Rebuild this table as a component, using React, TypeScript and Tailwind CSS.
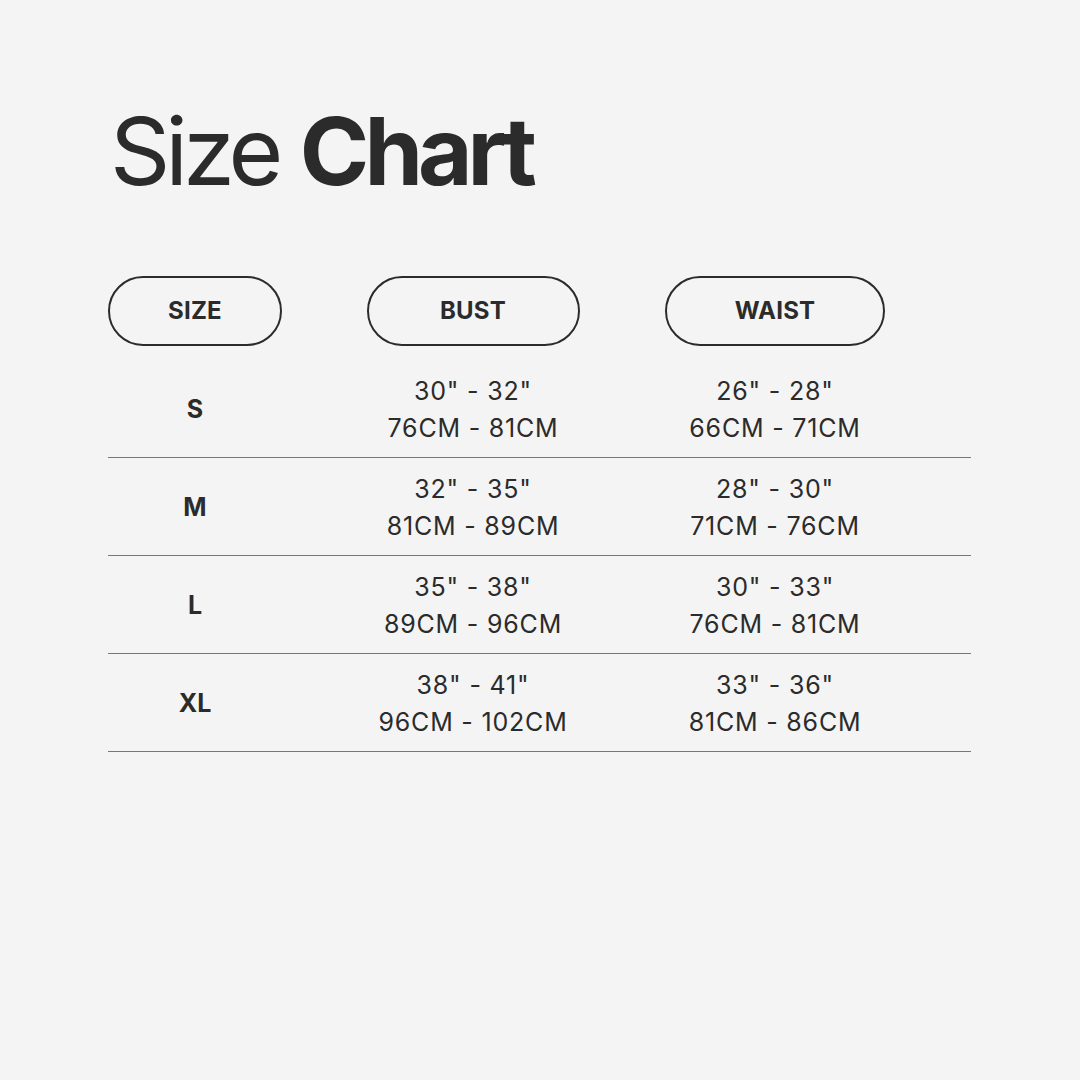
const rows = [
  { size: "S", bust: ['30" - 32"', "76CM - 81CM"], waist: ['26" - 28"', "66CM - 71CM"] },
  { size: "M", bust: ['32" - 35"', "81CM - 89CM"], waist: ['28" - 30"', "71CM - 76CM"] },
  { size: "L", bust: ['35" - 38"', "89CM - 96CM"], waist: ['30" - 33"', "76CM - 81CM"] },
  { size: "XL", bust: ['38" - 41"', "96CM - 102CM"], waist: ['33" - 36"', "81CM - 86CM"] },
];

function Cell({ lines }: { lines: string[] }) {
  return (
    <div className="flex flex-col items-center justify-center text-[25px] leading-[37px] tracking-[0.8px]">
      {lines.map((l) => (
        <span key={l}>{l}</span>
      ))}
    </div>
  );
}

export default function App() {
  return (
    <div className="w-[1080px] h-[1080px] bg-[#f4f4f4] text-[#2b2b2b] font-['Inter',sans-serif] pl-[108px] pt-[104px]">
      <h1 className="text-[94px] leading-none tracking-[-5px] pl-[2px]">
        Size <span className="font-bold">Chart</span>
      </h1>

      <div className="w-[863px] mt-[78px]">
        <div className="grid grid-cols-[174px_382px_222px] h-[70px]">
          <div className="flex items-center justify-center rounded-full border-2 border-[#2b2b2b] text-[24px] font-bold tracking-[0.2px]">
            SIZE
          </div>
          <div className="flex justify-center">
            <div className="flex items-center justify-center w-[213px] rounded-full border-2 border-[#2b2b2b] text-[24px] font-bold tracking-[0.2px]">
              BUST
            </div>
          </div>
          <div className="flex justify-center">
            <div className="flex items-center justify-center w-[220px] rounded-full border-2 border-[#2b2b2b] text-[24px] font-bold tracking-[0.2px]">
              WAIST
            </div>
          </div>
        </div>

        <div className="mt-[14px]">
          {rows.map((r) => (
            <div key={r.size} className="grid grid-cols-[174px_382px_222px] h-[98px] border-b border-[#777777] pt-[3px]">
              <div className="flex items-center justify-center text-[25px] font-bold">{r.size}</div>
              <Cell lines={r.bust} />
              <Cell lines={r.waist} />
            </div>
          ))}
        </div>
      </div>
    </div>
  );
}
